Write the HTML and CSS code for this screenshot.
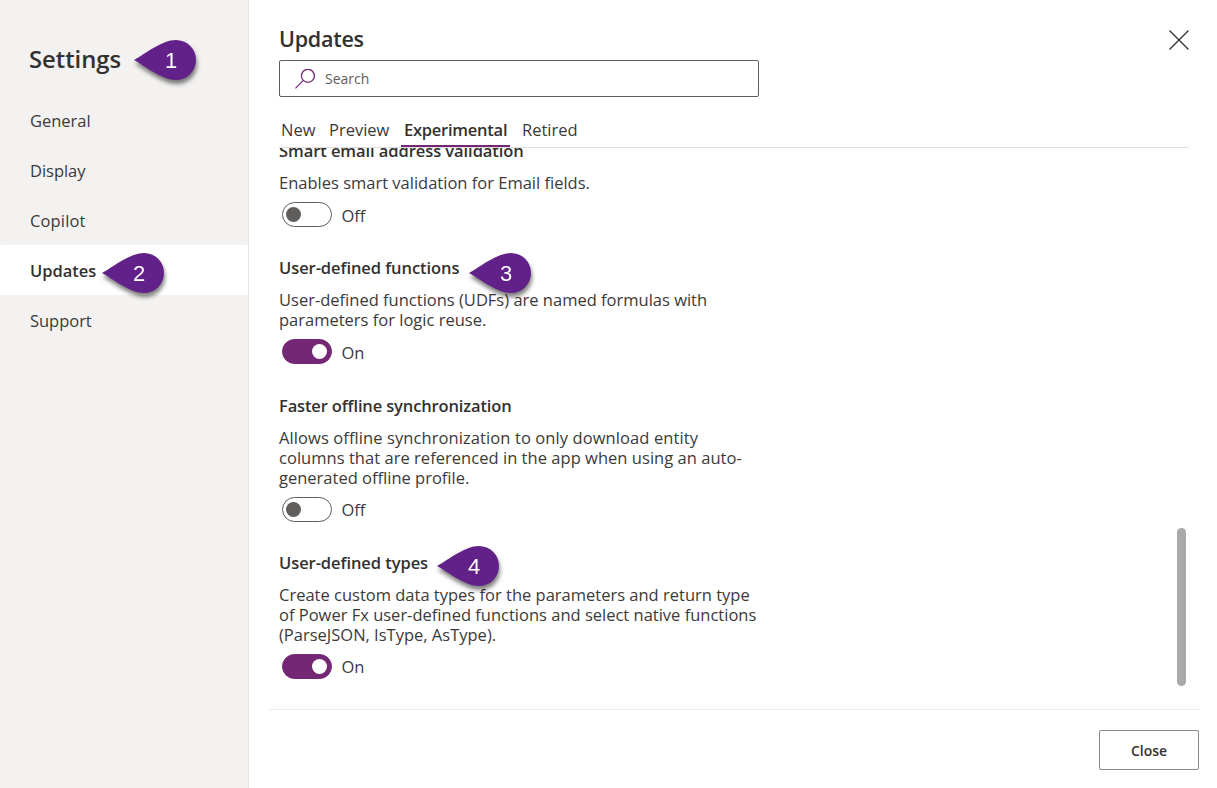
FILE: index.html
```html
<!DOCTYPE html>
<html lang="en">
<head>
<meta charset="utf-8">
<title>Settings</title>
<link rel="stylesheet" href="styles.css">
</head>
<body>
<div class="dialog">
  <aside class="sidebar">
    <h1 class="sidebar-title">Settings</h1>
    <nav class="nav">
      <a class="nav-item">General</a>
      <a class="nav-item">Display</a>
      <a class="nav-item copilot">Copilot</a>
      <a class="nav-item selected">Updates</a>
      <a class="nav-item">Support</a>
    </nav>
  </aside>
  <main class="main">
    <header class="header">
      <h2 class="title">Updates</h2>
      <svg class="dismiss" viewBox="0 0 20 20"><path d="M.5 .5l19 19M19.500 .5l-19 19"/></svg>
    </header>
    <div class="search">
      <svg class="search-icon" viewBox="0 0 20 20"><circle cx="12.900" cy="6.800" r="6.500"/><path d="M8.300 11.400L.4 19.400"/></svg>
      <span>Search</span>
    </div>
    <div class="tabs">
      <span class="tab tab-new">New</span>
      <span class="tab tab-preview">Preview</span>
      <span class="tab active">Experimental</span>
      <span class="tab tab-retired">Retired</span>
    </div>
    <div class="content">
      <div class="settings">
        <section class="setting">
          <h3 class="name">Smart email address validation</h3>
          <p class="desc">Enables smart validation for Email fields.</p>
          <div class="control"><span class="toggle"><i class="thumb"></i></span><span class="state">Off</span></div>
        </section>
        <section class="setting">
          <h3 class="name">User-defined functions</h3>
          <p class="desc">User-defined functions (UDFs) are named formulas with<br>parameters for logic reuse.</p>
          <div class="control"><span class="toggle on"><i class="thumb"></i></span><span class="state">On</span></div>
        </section>
        <section class="setting">
          <h3 class="name tight">Faster offline synchronization</h3>
          <p class="desc"><span class="loose">Allows offline synchronization to only download entity</span><br><span class="wide">columns that are referenced in the app when using an auto-</span><br>generated offline profile.</p>
          <div class="control"><span class="toggle"><i class="thumb"></i></span><span class="state">Off</span></div>
        </section>
        <section class="setting">
          <h3 class="name">User-defined types</h3>
          <p class="desc">Create custom data types for the parameters and return type<br>of Power Fx user-defined functions and select native functions<br>(ParseJSON, IsType, AsType).</p>
          <div class="control"><span class="toggle on"><i class="thumb"></i></span><span class="state">On</span></div>
        </section>
      </div>
      <div class="scrollbar"></div>
    </div>
    <footer class="footer"><button class="close">Close</button></footer>
  </main>
  <div class="pin pin-1"><svg viewBox="0 0 62 40"><path d="M0 20C11 14 28 0 42 0a20 20 0 0 1 0 40C28 40 11 26 0 20z"/></svg><b>1</b></div>
  <div class="pin pin-2"><svg viewBox="0 0 62 40"><path d="M0 20C11 14 28 0 42 0a20 20 0 0 1 0 40C28 40 11 26 0 20z"/></svg><b>2</b></div>
  <div class="pin pin-3"><svg viewBox="0 0 62 40"><path d="M0 20C11 14 28 0 42 0a20 20 0 0 1 0 40C28 40 11 26 0 20z"/></svg><b>3</b></div>
  <div class="pin pin-4"><svg viewBox="0 0 62 40"><path d="M0 20C11 14 28 0 42 0a20 20 0 0 1 0 40C28 40 11 26 0 20z"/></svg><b>4</b></div>
</div>
</body>
</html>
```
FILE: styles.css
```css
* { box-sizing: border-box; }
body {
  margin: 0;
  font-family: "Open Sans", "Noto Sans", sans-serif;
  font-size: 16.5px;
  line-height: 20px;
  color: #3b3a39;
  background: #fff;
}
h1, h2, h3, p { margin: 0; font-weight: 600; }
h1, h2, h3 { color: #323130; }
.dialog { position: relative; display: flex; width: 1217px; height: 788px; overflow: hidden; }
.sidebar { width: 249px; background: #f3f2f1; border-right: 1px solid #e6e5e4; padding-top: 43px; }
.sidebar-title { height: 52px; padding-left: 29px; font-size: 23.8px; line-height: 32px; }
.nav { display: flex; flex-direction: column; }
.nav-item { height: 50px; padding: 1px 0 0 30px; line-height: 50px; letter-spacing: -.03px; }
.nav-item.copilot { letter-spacing: .15px; }
.nav-item.selected { background: #fff; border-radius: 2px; font-weight: 600; color: #323130; }
.main { flex: 1; display: flex; flex-direction: column; padding-left: 20px; }
.header { display: flex; justify-content: space-between; height: 60px; padding: 25px 28px 0 10px; }
.title { font-size: 21.5px; line-height: 28px; letter-spacing: -.25px; }
.dismiss { width: 20px; height: 20px; margin-top: 5px; fill: none; stroke: #323130; stroke-width: 1.3; }
.search { display: flex; align-items: center; gap: 10px; width: 480px; height: 37px; margin-left: 10px; padding-left: 15px; border: 1px solid #605e5c; border-radius: 2px; font-size: 14px; color: #605e5c; }
.search-icon { width: 20px; height: 20px; fill: none; stroke: #742774; stroke-width: 1.3; }
.tabs { display: flex; height: 51px; margin: 0 28px 0 10px; padding-top: 18px; border-bottom: 1px solid #e1dfdd; }
.tab { height: 33px; line-height: 30px; }
.tab-new { width: 50px; padding-left: 2px; }
.tab-preview { width: 72px; }
.tab.active { width: 109px; height: 32px; padding-left: 3px; font-weight: 600; letter-spacing: -.25px; color: #323130; border-bottom: 2px solid #742774; }
.tab-retired { padding-left: 12px; }
.content { display: flex; justify-content: space-between; height: 561px; padding: 0 31px 0 10px; overflow: hidden; }
.settings { margin-top: -7px; }
.setting { margin-bottom: 31.3px; }
.name { height: 32px; font-size: 16.5px; letter-spacing: -.07px; }
.name.tight { letter-spacing: -.14px; }
.desc { font-weight: 400; margin-bottom: 9px; white-space: nowrap; }
.loose { letter-spacing: .09px; }
.wide { letter-spacing: .035px; }
.control { display: flex; align-items: center; gap: 9.5px; height: 25px; padding-left: 3px; }
.state { padding-top: 2px; }
.toggle { display: flex; align-items: center; width: 50px; height: 25px; padding: 0 4px 0 3px; border: 1px solid #605e5c; border-radius: 13px; }
.thumb { width: 15px; height: 15px; border-radius: 50%; background: #605e5c; }
.toggle.on { justify-content: flex-end; border-color: #742774; background: #742774; }
.toggle.on .thumb { background: #fff; }
.scrollbar { width: 9px; height: 158px; margin-top: 380px; border-radius: 5px; background: #a9a9a9; }
.footer { display: flex; justify-content: flex-end; width: 930px; padding-top: 20px; border-top: 1px solid #edebe9; }
.close { width: 100px; height: 40px; padding: 2px 0 0; border: 1px solid #8a8886; border-radius: 2px; background: #fff; font: 600 14px/20px "Open Sans", sans-serif; color: #323130; }
.pin { position: absolute; width: 62px; height: 40px; filter: drop-shadow(1px 4px 2px rgba(0, 0, 0, .5)); }
.pin svg { display: block; fill: #612189; }
.pin b { position: absolute; left: 27px; top: 0; width: 20px; text-align: center; font: 400 22px/41px "Liberation Sans", sans-serif; color: #fff; }
.pin-1 { left: 134px; top: 40px; }
.pin-2 { left: 102px; top: 253px; }
.pin-3 { left: 469px; top: 253px; }
.pin-4 { left: 437px; top: 546px; }
```
